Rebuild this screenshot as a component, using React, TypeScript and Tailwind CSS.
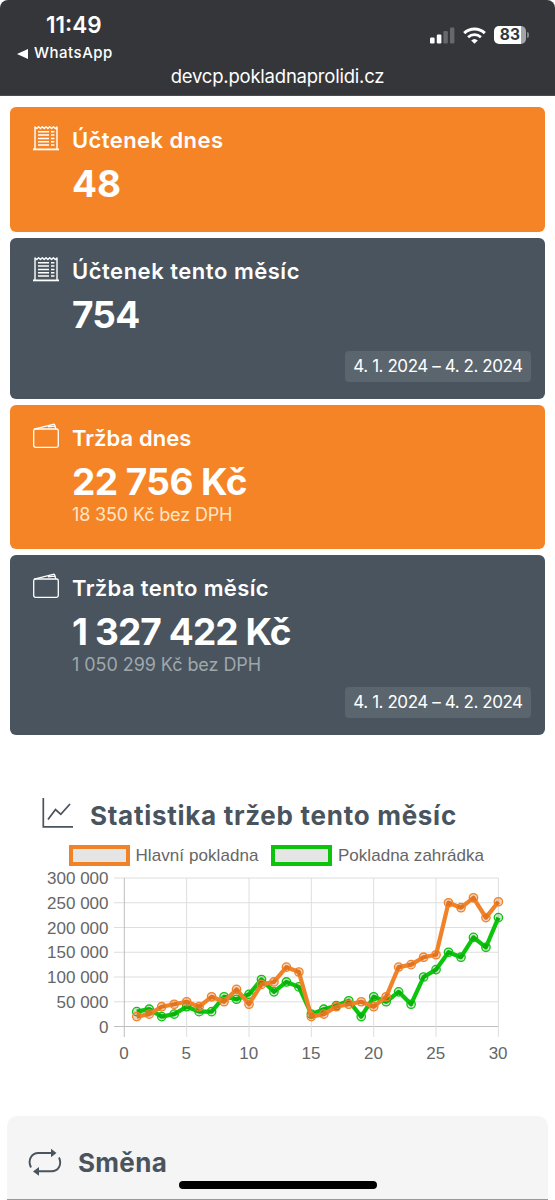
import React from 'react';
import { clsx } from 'clsx';

interface StatCardProps {
  icon: React.ReactNode;
  title: string;
  titleClass: string;
  value: string;
  valueClass?: string;
  note?: string;
  noteClass?: string;
  range?: string;
  className: string;
}

const ReceiptIcon = () => (
  <svg width="26" height="26" viewBox="0 0 26 26" fill="none" stroke="currentColor">
    <path
      d="M2 24V2l1.8 1.6L5.6 1.8l1.9 1.8 1.8-1.8 1.9 1.8L13 1.8l1.9 1.8 1.8-1.8 1.9 1.8 1.8-1.8 1.9 1.8L24 2v22"
      strokeWidth="1.4"
      strokeLinejoin="round"
    />
    <path d="M0 24.4h26" strokeWidth="1.8" />
    <path d="M5 6.8h11M5 10.1h11M5 13.4h11M5 16.7h11M5 20h11" strokeWidth="1.5" />
    <path d="M18 6.8h3.4M18 10.1h3.4M18 13.4h3.4M18 16.7h3.4M18 20h3.4" strokeWidth="1.5" />
  </svg>
);

const WalletIcon = () => (
  <svg width="26" height="26" viewBox="0 0 26 26" fill="none" stroke="currentColor" strokeWidth="1.3" strokeLinejoin="round">
    <rect x="0.7" y="6" width="24.6" height="18.4" rx="1.8" />
    <path d="M1.2 6.1 20.2 1.3c.9-.2 1.5.2 1.7 1l.9 3.7M15 3.900l6.500-.8" />
  </svg>
);

const StatCard: React.FC<StatCardProps> = ({ icon, title, titleClass, value, valueClass, note, noteClass, range, className }) => (
  <section className={clsx('flex flex-col rounded-md pl-[23px] pr-3.5 pt-[18px] pb-[17px] text-white', className)}>
    <div className="flex h-[30px] items-center gap-[13px]">
      <span className="-mt-1">{icon}</span>
      <h2 className={clsx('whitespace-nowrap text-[22px] font-semibold', titleClass)}>{title}</h2>
    </div>
    <p className={clsx('mt-1.5 ml-[39px] h-11 whitespace-nowrap text-[37px] font-bold leading-[45px]', valueClass)}>{value}</p>
    {note && <p className={clsx('ml-[39px] h-[23px] whitespace-nowrap text-[18px] leading-[23px]', noteClass)}>{note}</p>}
    {range && (
      <div className="mt-auto flex h-[31px] w-[186px] items-center justify-center self-end whitespace-nowrap rounded bg-[#5a656e] pt-px text-[17px] tracking-[-0.43px]">
        {range}
      </div>
    )}
  </section>
);

const StatusBar = () => (
  <header className="bg-white">
    <div className="h-24 rounded-t-lg border-b border-[#4b4b50] bg-[#34363a] text-white">
      <div className="flex h-[66px] justify-between pl-[17px] pr-[26px]">
        <div className="pt-[11px]">
          <div className="ml-[29px] text-[22.5px] leading-7 font-semibold">11:49</div>
          <div className="flex h-[29px] items-center gap-1.5 text-[15px] font-medium tracking-[0.5px]">
            <svg width="11" height="10" viewBox="0 0 11 10" fill="currentColor">
              <path d="M0 5 11 0v10z" />
            </svg>
            WhatsApp
          </div>
        </div>
        <div className="flex h-[70px] items-center gap-2">
          <svg width="25" height="18" viewBox="0 0 25 18" fill="currentColor">
            <rect x="0" y="11.5" width="4.6" height="6" rx="1.2" />
            <rect x="6.8" y="8.6" width="4.6" height="8.9" rx="1.2" />
            <rect x="13.4" y="5" width="4.4" height="12.5" rx="1.2" opacity=".25" />
            <rect x="20" y="1.5" width="4.4" height="16" rx="1.2" opacity=".25" />
          </svg>
          <svg width="23" height="17" viewBox="0 0 23 17" fill="none" stroke="currentColor" strokeWidth="3">
            <path d="M1.2 6.2a14.8 14.8 0 0 1 20.6 0" />
            <path d="M5.1 10.2a9.3 9.3 0 0 1 12.8 0" strokeWidth="2.7" />
            <path d="M11.5 16.8 8.2 13.4a4.9 4.9 0 0 1 6.6 0z" fill="currentColor" stroke="none" />
          </svg>
          <div className="flex items-center gap-px">
            <div className="flex h-[18px] w-8 items-center justify-center rounded-[5px] bg-[linear-gradient(90deg,#fff_83%,#a3a4a6_83%)] text-[15.5px] font-bold tracking-[0.2px] text-[#34363a]">
              83
            </div>
            <div className="h-1.5 w-0.5 rounded-r bg-[#85868a]" />
          </div>
        </div>
      </div>
      <div className="-mt-0.5 text-center text-[18.5px] leading-6 tracking-[-0.22px]">devcp.pokladnaprolidi.cz</div>
    </div>
  </header>
);

// Values in thousands of Kč, one entry per day
const mainRegister = [20, 25, 40, 45, 50, 40, 60, 50, 75, 45, 85, 90, 120, 110, 20, 25, 40, 45, 50, 40, 60, 120, 125, 140, 145, 250, 240, 260, 220, 252];
const gardenRegister = [30, 35, 20, 25, 40, 30, 30, 60, 55, 65, 95, 70, 90, 80, 25, 35, 42, 52, 20, 60, 50, 70, 45, 100, 115, 150, 140, 180, 160, 220];

const toX = (day: number) => 124.3 + day * 12.47;
const toY = (value: number) => 186.5 - value * 0.495;

const Series = ({ data, color, tint }: { data: number[]; color: string; tint: string }) => (
  <g stroke={color} fill="none">
    <polyline points={data.map((v, i) => `${toX(i + 1)},${toY(v)}`).join(' ')} strokeWidth="4.2" strokeLinejoin="round" />
    {data.map((v, i) => (
      <circle key={i} cx={toX(i + 1)} cy={toY(v)} r="4.2" strokeWidth="1.3" fill={tint} />
    ))}
  </g>
);

const SalesChart = () => (
  <svg width="555" height="230" viewBox="0 0 555 230" className="block font-['Liberation_Sans',sans-serif] text-[17px]" fill="#666">
    <rect x="71" y="7" width="57" height="17" fill="#e5e5e5" stroke="#f08228" strokeWidth="4" />
    <text x="135.5" y="21" textLength="123">Hlavní pokladna</text>
    <rect x="273" y="7" width="57" height="17" fill="#e5e5e5" stroke="#0cc40c" strokeWidth="4" />
    <text x="338" y="21" textLength="146">Pokladna zahrádka</text>

    {[0, 50, 100, 150, 200, 250, 300].map((v) => (
      <g key={v}>
        <path d={`M114 ${toY(v)}H498.5`} stroke={v === 0 ? '#bfbfbf' : '#dedede'} />
        <text x="108.5" y={toY(v) + 6} textAnchor="end">{v === 0 ? '0' : `${v} 000`}</text>
      </g>
    ))}
    {[0, 5, 10, 15, 20, 25, 30].map((d) => (
      <g key={d}>
        <path d={`M${toX(d)} 38V197`} stroke={d === 0 ? '#bfbfbf' : '#dedede'} />
        <text x={toX(d) - 0.3} y="219" textAnchor="middle">{d}</text>
      </g>
    ))}

    <Series data={gardenRegister} color="#0cc40c" tint="rgba(0,100,0,0.18)" />
    <Series data={mainRegister} color="#f08228" tint="rgba(190,70,0,0.24)" />
  </svg>
);

export default function App() {
  return (
    <div className="relative h-[1200px] w-[555px] overflow-hidden bg-white font-['Inter',sans-serif]">
      <StatusBar />
      <main>
        <div className="flex flex-col gap-1.5 px-2.5 pt-[11px]">
          <StatCard
            className="h-[125px] bg-[#f58427]"
            icon={<ReceiptIcon />}
            title="Účtenek dnes"
            titleClass="tracking-[0.42px]"
            value="48"
          />
          <StatCard
            className="h-[161px] bg-[#49545e]"
            icon={<ReceiptIcon />}
            title="Účtenek tento měsíc"
            titleClass="tracking-[0.52px]"
            value="754"
            valueClass="tracking-[-0.8px]"
            range="4. 1. 2024 – 4. 2. 2024"
          />
          <StatCard
            className="h-[144px] bg-[#f58427]"
            icon={<WalletIcon />}
            title="Tržba dnes"
            titleClass="tracking-[0.05px]"
            value="22 756 Kč"
            valueClass="tracking-[-0.55px]"
            note="18 350 Kč bez DPH"
            noteClass="tracking-[-0.15px] text-[#ffe6c8]"
          />
          <StatCard
            className="h-[180px] bg-[#49545e]"
            icon={<WalletIcon />}
            title="Tržba tento měsíc"
            titleClass="tracking-[0.38px]"
            value="1 327 422 Kč"
            valueClass="tracking-[-0.9px]"
            note="1 050 299 Kč bez DPH"
            noteClass="tracking-[-0.06px] text-[#a0a7ac]"
            range="4. 1. 2024 – 4. 2. 2024"
          />
        </div>

        <section className="h-[381px] pt-[57px] text-[#49545e]">
          <div className="mb-px flex h-[47px] items-center gap-4 pl-[42px]">
            <svg width="32" height="32" viewBox="0 0 32 32" fill="none" stroke="currentColor" className="-mt-1.5">
              <path d="M1.3 1v28.8H31" strokeWidth="1.7" />
              <path d="m6 22.5 7.5-10 5.3 4.8L28 7" strokeWidth="1.8" />
            </svg>
            <h2 className="whitespace-nowrap text-[26px] font-bold tracking-[0.72px]">Statistika tržeb tento měsíc</h2>
          </div>
          <SalesChart />
        </section>

        <section className="mx-[7px] h-[84px] rounded-t-[10px] border-b border-[#999] bg-[#f5f5f5] pt-[26px] text-[#49545e]">
          <div className="flex h-10 items-center gap-4 pl-[21px]">
            <svg width="34" height="28" viewBox="0 0 34 28" fill="none" stroke="currentColor" strokeWidth="1.9">
              <path d="M3 19.5C-.7 12 3.500 5 10.500 5H23.500" />
              <path d="M23 .8 28.500 5 23 9.300z" fill="currentColor" stroke="none" />
              <path d="M31 9.500c3.200 7-.5 13.800-7.500 13.800H10.500" />
              <path d="M11 19.100 5 23.400l6 4.300z" fill="currentColor" stroke="none" />
            </svg>
            <h2 className="text-[26px] font-bold tracking-[0.3px]">Směna</h2>
          </div>
        </section>
      </main>
      <div className="absolute left-[179px] top-[1181px] h-2 w-[198px] rounded-full bg-black" />
    </div>
  );
}
